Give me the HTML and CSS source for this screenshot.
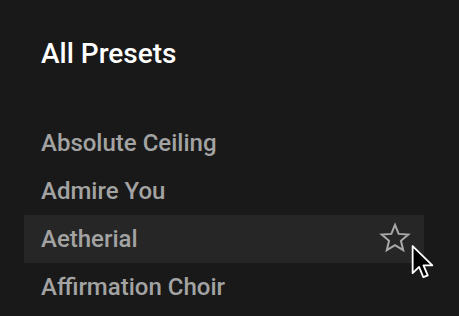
FILE: index.html
```html
<!DOCTYPE html>
<html>
<head>
<meta charset="utf-8">
<link rel="stylesheet" href="styles.css">
</head>
<body>
<div class="panel">
  <h1 class="title">All Presets</h1>
  <ul class="list">
    <li class="item">Absolute Ceiling</li>
    <li class="item">Admire You</li>
    <li class="item item--hover">Aetherial
      <svg class="star" viewBox="0 0 24 24" width="34" height="34"><path d="M12 2.8l2.6 6.3 6.8.5-5.2 4.4 1.6 6.6L12 17l-5.8 3.6 1.6-6.6-5.2-4.4 6.8-.5z" fill="none" stroke="#a9a9a9" stroke-width="1.4" stroke-linejoin="miter"/></svg>
      <svg class="cursor" viewBox="0 0 14 22" width="23" height="37"><path d="M1 1v16.5l3.9-3.8 2.6 6.2 2.7-1.1-2.6-6.1h5.4z" fill="#000" stroke="#fff" stroke-width="1.1" stroke-linejoin="round"/></svg>
    </li>
    <li class="item">Affirmation Choir</li>
  </ul>
</div>
</body>
</html>
```
FILE: styles.css
```css
html, body {
  margin: 0;
  padding: 0;
  background: #191919;
}
.panel {
  width: 459px;
  height: 316px;
  padding: 0 0 0 24px;
  box-sizing: border-box;
  font-family: Roboto, "Noto Sans", sans-serif;
  overflow: hidden;
}
.title {
  margin: 0;
  padding: 38px 0 0 17px;
  height: 119px;
  box-sizing: border-box;
  font-size: 28px;
  font-weight: 500;
  color: #ffffff;
  line-height: 32px;
}
.list {
  list-style: none;
  margin: 0;
  padding: 0;
  width: 400px;
}
.item {
  position: relative;
  height: 48px;
  display: flex;
  align-items: center;
  padding-left: 17px;
  font-size: 24px;
  font-weight: 500;
  color: #a3a3a3;
}
.item--hover {
  background: #262626;
}
.star {
  position: absolute;
  right: 12px;
  top: 6px;
}
.cursor {
  position: absolute;
  left: 387px;
  top: 29px;
}
```
